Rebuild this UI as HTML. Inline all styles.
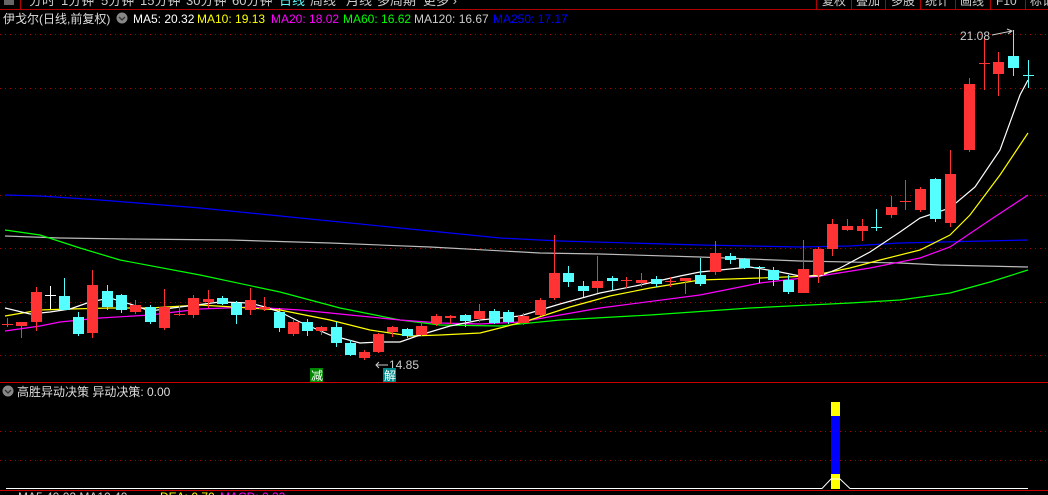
<!DOCTYPE html>
<html><head><meta charset="utf-8"><style>
html,body{margin:0;padding:0;background:#000;width:1048px;height:495px;overflow:hidden}
svg{display:block}
text{font-family:"Liberation Sans","Noto Sans CJK SC",sans-serif}
</style></head><body>
<svg width="1048" height="495" xmlns="http://www.w3.org/2000/svg">
<!-- top menu -->
<line x1="0" y1="9.5" x2="1048" y2="9.5" stroke="#b00000"/>
<line x1="20.5" y1="0" x2="20.5" y2="9" stroke="#b00000"/>
<rect x="4" y="0" width="10" height="5" fill="#666"/>
<g font-size="13" fill="#ccc">
<text x="29" y="5">分时</text><text x="61" y="5">1分钟</text><text x="101" y="5">5分钟</text><text x="140" y="5">15分钟</text><text x="186" y="5">30分钟</text><text x="232" y="5">60分钟</text><text x="279" y="5" fill="#5ff">日线</text><text x="310" y="5">周线</text><text x="346" y="5">月线</text><text x="377" y="5">多周期</text><text x="423" y="5">更多 ›</text>
</g>
<g stroke="#b00000">
<line x1="816.5" y1="0" x2="816.5" y2="9"/><line x1="851.5" y1="0" x2="851.5" y2="9"/><line x1="885.5" y1="0" x2="885.5" y2="9"/><line x1="920.5" y1="0" x2="920.5" y2="9"/><line x1="955.5" y1="0" x2="955.5" y2="9"/><line x1="990.5" y1="0" x2="990.5" y2="9"/><line x1="1025.5" y1="0" x2="1025.5" y2="9"/>
</g>
<g font-size="12" fill="#ccc"><text x="822" y="5">复权</text><text x="856" y="5">叠加</text><text x="891" y="5">多股</text><text x="925" y="5">统计</text><text x="960" y="5">画线</text><text x="996" y="5">F10</text><text x="1030" y="5">标记</text></g>
<!-- info line -->
<g font-size="12">
<text x="3" y="23" fill="#ddd">伊戈尔(日线,前复权)</text>
<circle cx="122" cy="18" r="5.5" fill="#888"/>
<path d="M119 17 L122 20 L125 17" stroke="#333" fill="none" stroke-width="1.3"/>
<text x="133" y="23" fill="#fff">MA5: 20.32</text>
<text x="197" y="23" fill="#ff0">MA10: 19.13</text>
<text x="271" y="23" fill="#f0f">MA20: 18.02</text>
<text x="343" y="23" fill="#0f0">MA60: 16.62</text>
<text x="414" y="23" fill="#ccc">MA120: 16.67</text>
<text x="493" y="23" fill="#00f">MA250: 17.17</text>
</g>
<!-- grid -->
<g stroke="#a00" stroke-dasharray="1,4">
<line x1="0" y1="34.5" x2="1048" y2="34.5"/><line x1="0" y1="88.5" x2="1048" y2="88.5"/><line x1="0" y1="195.5" x2="1048" y2="195.5"/><line x1="0" y1="248.5" x2="1048" y2="248.5"/><line x1="0" y1="302.5" x2="1048" y2="302.5"/><line x1="0" y1="355.5" x2="1048" y2="355.5"/><line x1="0" y1="431.5" x2="1048" y2="431.5"/><line x1="0" y1="460.5" x2="1048" y2="460.5"/>
</g>
<line x1="0" y1="382.5" x2="1048" y2="382.5" stroke="#c00"/>
<!-- MAs -->
<g fill="none" stroke-width="1.2">
<polyline stroke="#00f" points="5,195 40,196 100,200 200,208 300,218 400,228 500,238 540,240 560,241 700,245 800,247 850,246 900,243 1028,240"/>
<polyline stroke="#bbb" points="5,236 60,238 130,239 230,240 330,243 430,247 540,253 600,254 700,257 800,261 900,263 940,265 1028,267"/>
<polyline stroke="#0f0" points="5,230 40,235 80,248 120,260 200,275 280,292 340,308 400,320 440,325 500,326 560,320 650,315 750,308 850,303 900,300 950,293 990,282 1028,270"/>
<polyline stroke="#f0f" points="5,331 40,326 60,322 100,318 150,315 200,309 250,307 300,310 350,315 400,320 440,323 480,324 520,322 600,308 700,295 760,283 820,276 870,268 920,258 950,247 990,220 1028,195"/>
<polyline stroke="#ff0" points="5,316 40,310 70,309 110,308 150,308 200,305 250,308 280,310 330,320 370,330 410,336 440,335 480,333 500,328 530,320 570,307 610,296 650,288 700,280 760,278 810,276 850,268 880,260 920,250 950,235 970,215 1000,175 1028,133"/>
<polyline stroke="#fff" points="5,308 30,314 50,312 70,309 90,302 110,298 130,304 150,311 180,307 220,302 250,303 265,307 280,312 300,322 330,335 360,343 380,342 400,342 420,335 450,326 480,320 520,316 560,304 600,293 640,285 680,276 700,272 750,267 780,272 800,276 820,276 840,268 870,252 900,232 920,218 950,208 975,187 1000,150 1020,95 1028,80"/>
</g>
<!-- candles -->
<g id="c"></g>
<!-- labels -->
<text x="960" y="40" font-size="12" fill="#ccc">21.08</text>
<path d="M992 35 L1012 31 M1007 29 L1012 31 L1008 34" stroke="#ccc" fill="none"/>
<path d="M376 365 L388 365 M379 362 L376 365 L379 368" stroke="#ccc" fill="none"/>
<text x="389" y="369" font-size="12" fill="#ccc">14.85</text>
<rect x="310" y="368" width="13" height="14" fill="#080"/>
<text x="311" y="380" font-size="12" fill="#fff">减</text>
<rect x="383" y="368" width="13" height="14" fill="#088"/>
<text x="384" y="380" font-size="12" fill="#fff">解</text>
<!-- lower pane -->
<circle cx="8" cy="391" r="5.5" fill="#888"/>
<path d="M5 390 L8 393 L11 390" stroke="#333" fill="none" stroke-width="1.3"/>
<text x="17" y="396" font-size="12" fill="#ddd">高胜异动决策 异动决策: 0.00</text>
<rect x="831" y="402" width="9" height="14" fill="#ff0"/>
<rect x="831" y="416" width="9" height="58" fill="#00f"/>
<rect x="831" y="474" width="9" height="15" fill="#ff0"/>
<polyline points="6,488.5 822,488.5 831,479 840,479 850,488.5 1028,488.5" fill="none" stroke="#fff" stroke-width="1"/>
<line x1="0" y1="490.5" x2="1048" y2="490.5" stroke="#c00"/>
<g font-size="12"><text x="18" y="501" fill="#ccc">MA5 40.02 MA10 40.</text><text x="160" y="501" fill="#ff0">DEA: 0.70</text><text x="220" y="501" fill="#f0f">MACD: 0.33</text></g>
</svg>
<script>
var d=[[7,324,324,318,327,'r'],[21,322,326,322,338,'r'],[36,292,322,287,331,'r'],[50,295,295,286,309,'w'],[64,296,310,278,310,'c'],[78,317,334,312,336,'c'],[92,285,333,270,338,'r'],[107,291,307,285,310,'c'],[121,295,310,294,313,'c'],[135,305,312,300,314,'r'],[150,307,322,305,324,'c'],[164,307,328,289,330,'r'],[179,314,314,306,316,'r'],[193,298,315,295,318,'r'],[208,299,302,290,308,'r'],[222,298,304,296,305,'c'],[236,303,315,301,324,'c'],[250,300,310,288,315,'r'],[264,307,309,297,311,'r'],[279,312,328,308,332,'c'],[293,322,334,319,336,'r'],[307,322,331,319,336,'c'],[321,327,331,326,335,'r'],[336,327,343,322,347,'c'],[350,343,355,340,356,'c'],[364,352,358,350,360,'r'],[378,334,352,333,353,'r'],[392,327,332,326,337,'r'],[407,329,336,328,338,'c'],[421,326,335,322,336,'r'],[436,316,324,314,326,'r'],[450,316,318,315,324,'r'],[465,315,321,314,327,'c'],[479,311,319,304,322,'r'],[494,311,323,309,324,'c'],[508,312,322,310,324,'c'],[523,316,323,313,325,'r'],[540,300,315,298,316,'r'],[554,273,298,235,300,'r'],[568,273,282,266,287,'c'],[583,286,291,281,297,'c'],[597,281,288,256,293,'r'],[612,278,281,276,290,'c'],[626,280,280,277,288,'r'],[641,280,283,273,287,'r'],[656,279,284,276,287,'c'],[670,281,281,277,287,'r'],[685,278,281,278,294,'r'],[700,275,284,258,286,'c'],[715,253,272,241,275,'r'],[730,256,260,253,264,'c'],[744,259,268,258,269,'c'],[759,267,268,266,283,'c'],[773,270,280,267,286,'c'],[788,280,292,275,294,'c'],[803,269,293,240,293,'r'],[818,249,275,247,283,'r'],[832,224,249,219,256,'r'],[847,226,230,219,231,'r'],[862,226,231,219,241,'r'],[876,227,227,209,231,'c'],[891,207,215,196,218,'r'],[905,201,201,180,210,'r'],[920,189,210,187,212,'r'],[935,179,219,178,222,'c'],[950,174,223,150,227,'r'],[969,84,150,78,152,'r'],[984,63,63,38,90,'r'],[998,62,74,52,96,'r'],[1013,56,68,30,76,'c'],[1028,75,75,60,88,'c']];
var col={r:'#ff3333',c:'#55ffff',w:'#ffffff'};var s='';
d.forEach(function(a){var x=a[0],t=Math.min(a[1],a[2]),b=Math.max(a[1],a[2]),c=col[a[5]];
s+='<line x1="'+(x+.5)+'" y1="'+a[3]+'" x2="'+(x+.5)+'" y2="'+a[4]+'" stroke="'+c+'"/>';
if(b-t<2){s+='<rect x="'+(x-5)+'" y="'+t+'" width="11" height="1" fill="'+c+'"/>';}
else s+='<rect x="'+(x-5)+'" y="'+t+'" width="11" height="'+(b-t)+'" fill="'+c+'"/>';});
document.getElementById('c').innerHTML=s;
</script>
</body></html>
